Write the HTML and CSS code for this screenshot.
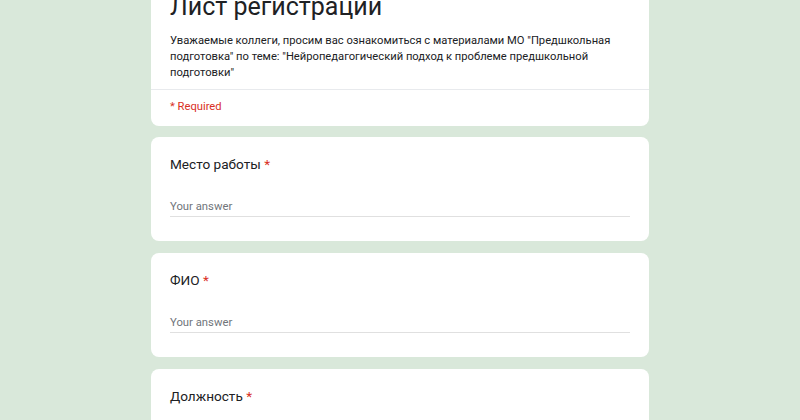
FILE: index.html
```html
<!DOCTYPE html>
<html lang="ru">
<head>
<meta charset="utf-8">
<title>Лист регистрации</title>
<link rel="stylesheet" href="styles.css">
</head>
<body>
<div class="form">
  <div class="card header">
    <div class="header-main">
      <h1 class="title">Лист регистрации</h1>
      <p class="desc">Уважаемые коллеги, просим вас ознакомиться с материалами МО "Предшкольная подготовка" по теме: "Нейропедагогический подход к проблеме предшкольной подготовки"</p>
    </div>
    <div class="header-req">* Required</div>
  </div>
  <div class="card question">
    <div class="q-label">Место работы <span class="star">*</span></div>
    <div class="answer">Your answer</div>
  </div>
  <div class="card question">
    <div class="q-label">ФИО <span class="star">*</span></div>
    <div class="answer">Your answer</div>
  </div>
  <div class="card question">
    <div class="q-label">Должность <span class="star">*</span></div>
    <div class="answer">Your answer</div>
  </div>
</div>
</body>
</html>
```
FILE: styles.css
```css
html, body {
  margin: 0;
  padding: 0;
  background: #d9e8da;
  font-family: Roboto, "Noto Sans", sans-serif;
  color: #202124;
  overflow: hidden;
}
.form {
  width: 498px;
  margin: -40px auto 0;
  display: flex;
  flex-direction: column;
  gap: 11px;
}
.card {
  background: #fff;
  border-radius: 8px;
}
.header-main {
  padding: 29px 19px 8px;
  border-bottom: 1px solid #e8eaed;
}
.title {
  margin: 0;
  font-weight: 400;
  font-size: 25px;
  line-height: 36px;
  color: #202124;
}
.desc {
  margin: 8px 0 0;
  font-size: 11.2px;
  line-height: 16px;
  color: #202124;
}
.header-req {
  padding: 9px 19px 11px;
  font-size: 11.2px;
  line-height: 16px;
  color: #d93025;
}
.question {
  padding: 17px 19px 24px;
  height: 63px;
}
.question + .question {
  margin-top: 1px;
}
.q-label {
  font-size: 13.6px;
  line-height: 20px;
  color: #202124;
}
.star {
  color: #d93025;
}
.answer {
  margin-top: 24px;
  font-size: 11.3px;
  line-height: 18px;
  color: #70757a;
  border-bottom: 1px solid #e0e0e0;
}
```
